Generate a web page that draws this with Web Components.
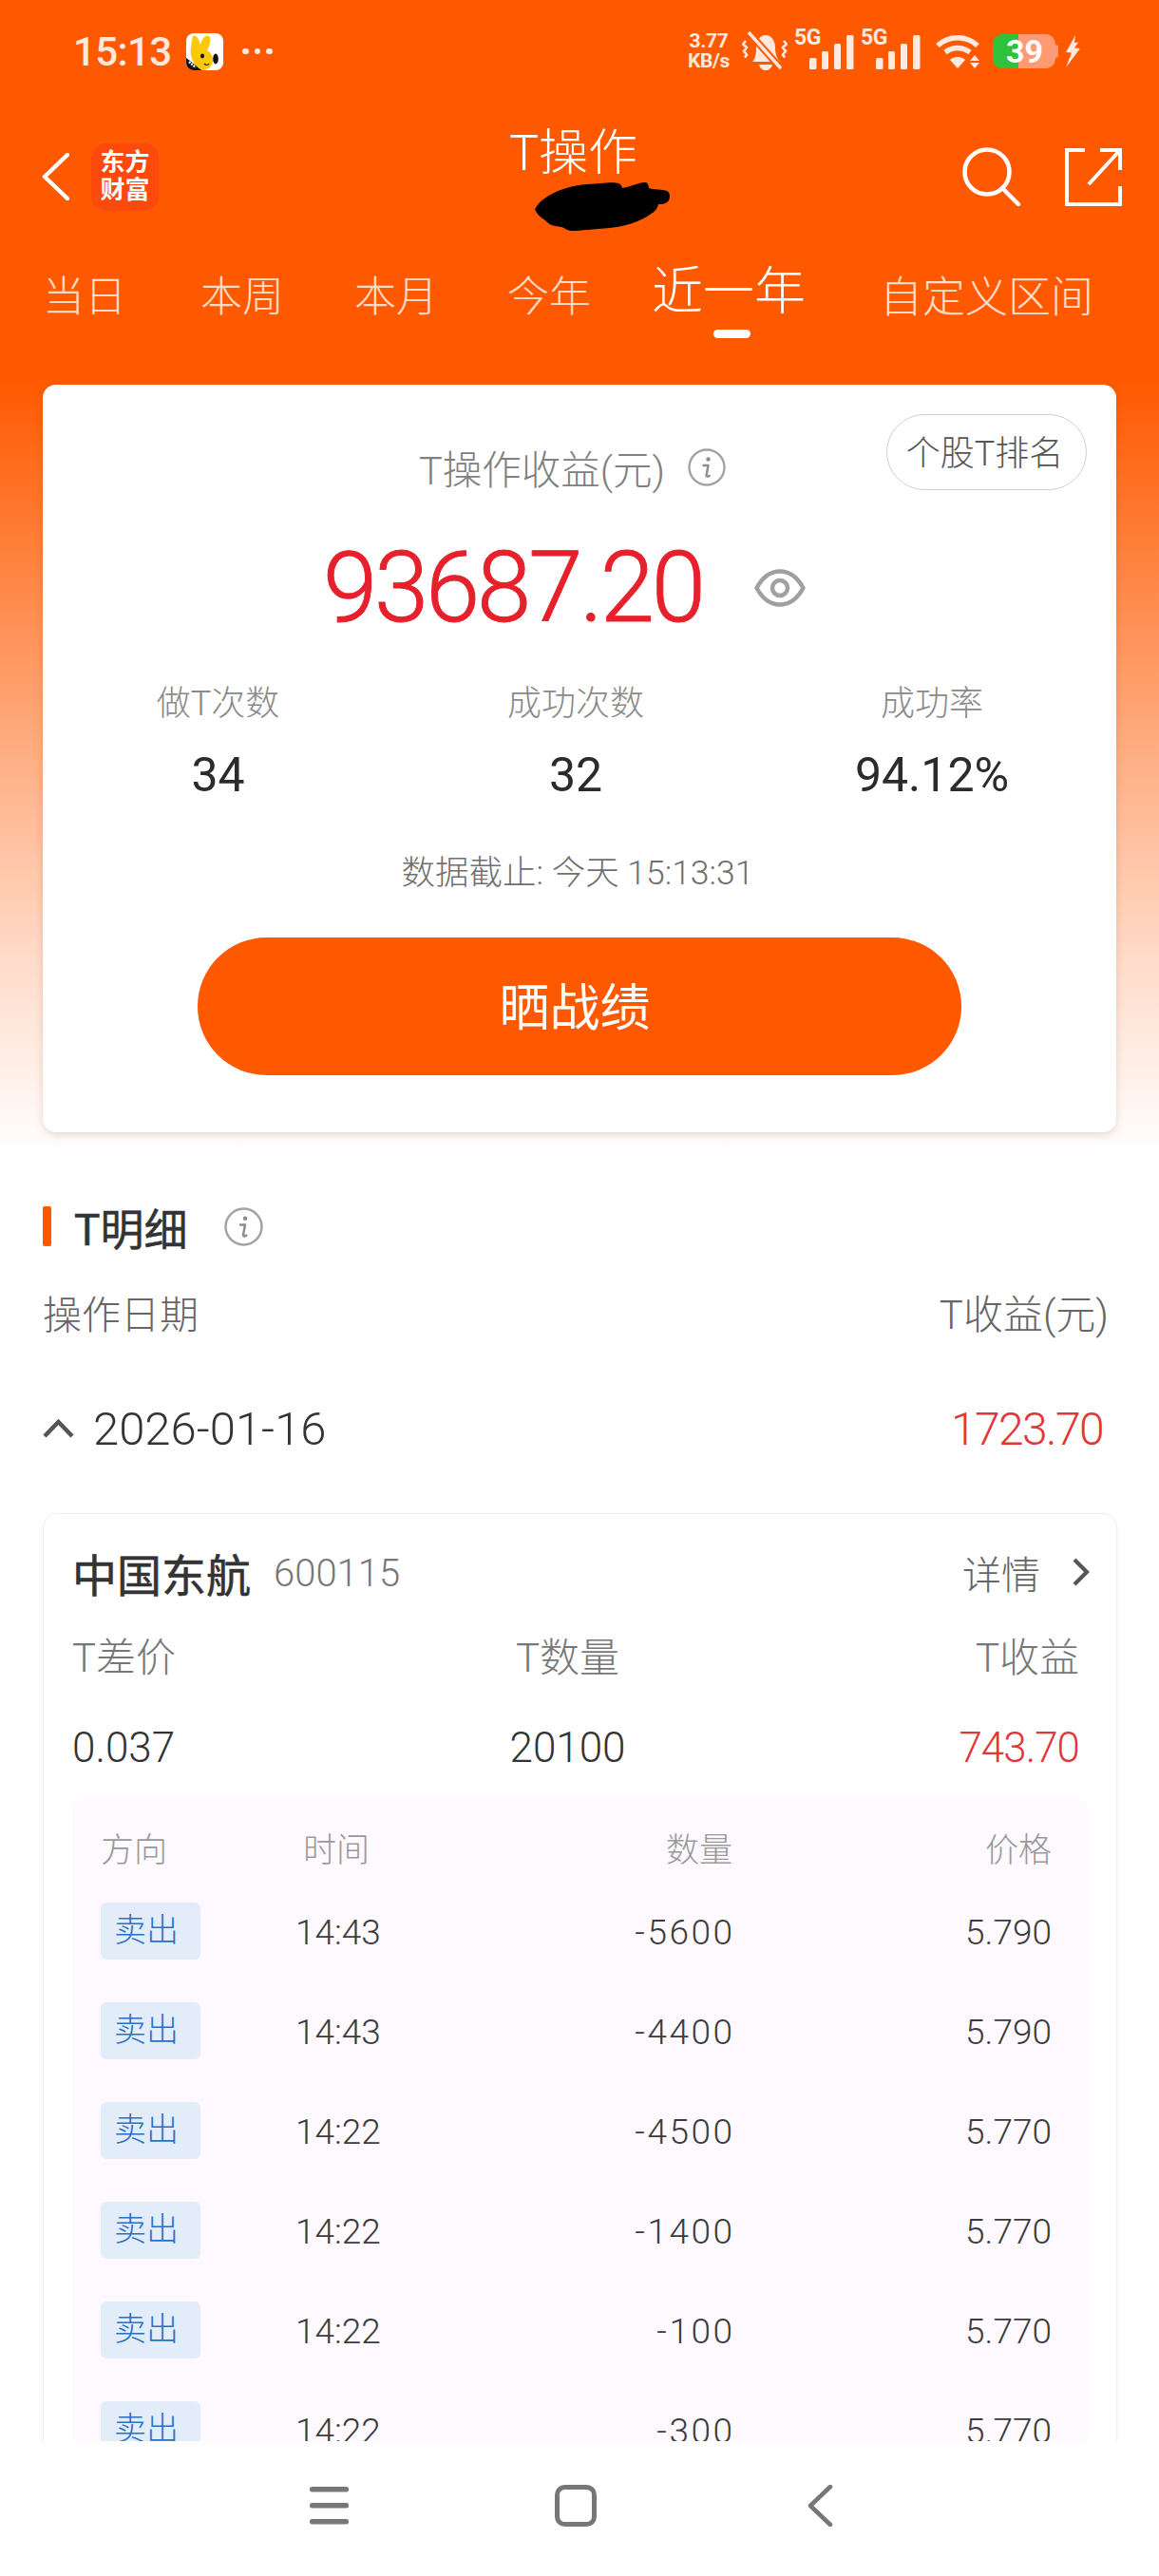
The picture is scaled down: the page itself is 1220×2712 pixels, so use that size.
<!DOCTYPE html>
<html lang="zh">
<head>
<meta charset="utf-8">
<title>T操作</title>
<style>
  html, body { margin: 0; padding: 0; }
  body {
    width: 1220px;
    height: 2712px;
    overflow: hidden;
    font-family: Roboto, "Noto Sans CJK SC", sans-serif;
    background: #fff;
  }
</style>
</head>
<body>
<t-page>
  <status-bar></status-bar>
  <app-header title-text="T操作"></app-header>
  <period-tabs></period-tabs>
  <summary-card></summary-card>
  <detail-section>
    <trade-card name="中国东航" code="600115" spread="0.037" amount="20100" profit="743.70">
      <trade-row time="14:43" qty="-5600" price="5.790"></trade-row>
      <trade-row time="14:43" qty="-4400" price="5.790"></trade-row>
      <trade-row time="14:22" qty="-4500" price="5.770"></trade-row>
      <trade-row time="14:22" qty="-1400" price="5.770"></trade-row>
      <trade-row time="14:22" qty="-100" price="5.770"></trade-row>
      <trade-row time="14:22" qty="-300" price="5.770"></trade-row>
    </trade-card>
  </detail-section>
</t-page>
<nav-bar></nav-bar>

<script>
const FONT = 'Roboto, "Noto Sans CJK SC", sans-serif';

const infoIcon = size => `
<svg width="${size}" height="${size}" viewBox="0 0 40 40" fill="none">
  <circle cx="20" cy="20" r="18.5" stroke="#a3a3a3" stroke-width="2.4"/>
  <circle cx="21.5" cy="11.5" r="2.2" fill="#8d8d8d"/>
  <path d="M16.5 18h5l-2 10.5c-.2 1.3 1 1.6 3.2.4" stroke="#8d8d8d" stroke-width="2.4" stroke-linecap="round" stroke-linejoin="round"/>
</svg>`;

const signal = `
<svg width="47" height="36" viewBox="0 0 47 36" fill="#ffe9df">
  <rect x="0" y="24" width="7.5" height="12" rx="1.5"/>
  <rect x="13" y="17" width="7" height="19" rx="1.5"/>
  <rect x="26" y="9" width="7" height="27" rx="1.5"/>
  <rect x="39" y="0" width="7.5" height="36" rx="1.5"/>
</svg>`;

class TPage extends HTMLElement {
  constructor() {
    super();
    this.attachShadow({ mode: 'open' });
    this.shadowRoot.innerHTML = `
<style>
  :host {
    display: block;
    height: 2570px;
    overflow: hidden;
    background: linear-gradient(180deg, #ff5900 0, #ff5900 400px, #ff9a63 700px, #ffd9c6 1000px, #ffffff 1215px);
    font-family: ${FONT};
  }
</style>
<slot></slot>`;
  }
}

class StatusBar extends HTMLElement {
  constructor() {
    super();
    this.attachShadow({ mode: 'open' });
    this.shadowRoot.innerHTML = `
<style>
  :host {
    display: flex;
    align-items: center;
    height: 108px;
    padding-left: 77px;
    color: #ffe9df;
    font-family: Roboto, sans-serif;
    box-sizing: border-box;
  }
  .time { font-size: 42px; font-weight: 500; width: 119px; letter-spacing: -.6px; }
  .app { width: 39px; height: 39px; display: block; }
  .dots { display: flex; gap: 6px; margin-left: 20px; }
  .dots i { width: 6.500px; height: 6.500px; border-radius: 50%; background: #ffe9df; }
  .right { display: flex; align-items: center; margin-left: auto; }
  .speed { width: 58px; font-size: 21px; font-weight: 700; line-height: 21px; text-align: center; margin-right: 6px; letter-spacing: -.3px; }
  .speed span { display: block; }
  .bell { display: block; margin: 0 8px 0 0; }
  .net { position: relative; width: 70px; height: 40px; }
  .net b { display: block; font-size: 23px; line-height: 20px; font-weight: 700; margin: -4px 0 0 -1px; letter-spacing: -.4px; }
  .net svg { position: absolute; left: 15px; top: 3px; }
  .wifi { display: block; margin: 0 10px 0 8px; }
  .battery { position: relative; width: 66px; height: 36px; display: flex; border-radius: 10px; background: linear-gradient(90deg, #2fc23a 27px, #ff9a75 27px); }
  .battery span { margin-left: 14px; color: #fff; font-size: 34px; line-height: 36px; font-weight: 700; }
  .nub { width: 3px; height: 14px; background: #ff9a75; border-radius: 0 3px 3px 0; }
  .bolt { display: block; margin: 0 82px 0 6px; }
</style>
<div class="time">15:13</div>
<svg class="app" viewBox="0 0 39 39">
  <defs><clipPath id="r"><rect width="39" height="39" rx="8"/></clipPath></defs>
  <g clip-path="url(#r)">
    <rect width="39" height="39" fill="#fff"/>
    <path d="M0 26 L17 39 H0Z" fill="#111"/>
    <path d="M7 3c3-2 6 2 8 9 2-7 6-11 9-9s1 10-2 15c5 3 8 9 5 15-2 4-7 6-10 6-6-3-11-9-12-16-1-7 1-15 2-20z" fill="#fbc80a"/>
    <ellipse cx="17" cy="24" rx="2" ry="2.4" fill="#111"/>
    <ellipse cx="31" cy="27" rx="2.8" ry="5.4" fill="#111"/>
    <path d="M19 32c2 2 4 2 5 0" stroke="#111" stroke-width="1.2" fill="none"/>
    <path d="M3 30l7 6" stroke="#eee" stroke-width="2.5" stroke-dasharray="2 1"/>
  </g>
</svg>
<div class="dots"><i></i><i></i><i></i></div>
<div class="right">
  <div class="speed"><span>3.77</span><span>KB/s</span></div>
  <svg class="bell" width="48" height="42" viewBox="0 0 48 42" fill="none">
    <path d="M11 32c3-3 4-8 4-14 0-8 4-14 10-14s10 6 10 13c0 7 2 12 5 15z" fill="#ffe9df"/>
    <path d="M18 35h14c-1 4-4 6-7 6s-6-2-7-6z" fill="#ffe9df"/>
    <path d="M7 1l34 38" stroke="#ff5900" stroke-width="7.500"/>
    <path d="M7 1l34 38" stroke="#ffe9df" stroke-width="3.400"/>
    <path d="M4 10l-3 3.500 4 3.500-3 4 3 3.500-2 3M44 10l3 3.500-4 3.500 3 4-3 3.500 2 3" stroke="#ffe9df" stroke-width="2.600"/>
  </svg>
  <div class="net"><b>5G</b>${signal}</div>
  <div class="net"><b>5G</b>${signal}</div>
  <svg class="wifi" width="50" height="38" viewBox="0 0 50 38" fill="none">
    <path d="M2 13c12-11 30-11 42 0M10 20c8-6 18-6 26 0" stroke="#ffe9df" stroke-width="5.400"/>
    <path d="M15 28c4-4 12-4 16 0l-8 9z" fill="#ffe9df"/>
    <path d="M41 23l5 6h-10zM41 37l5-6h-10z" fill="#ffe9df"/>
  </svg>
  <div class="battery"><span>39</span></div>
  <div class="nub"></div>
  <svg class="bolt" width="18" height="34" viewBox="0 0 18 34" fill="#ffe9df">
    <path d="M12 0L2 18l6 .5L2 34l15-20-6-.5 4-6-4 .5z"/>
  </svg>
</div>`;
  }
}

class AppHeader extends HTMLElement {
  constructor() {
    super();
    this.attachShadow({ mode: 'open' });
    this.shadowRoot.innerHTML = `
<style>
  :host {
    display: flex;
    position: relative;
    height: 156px;
    align-items: center;
    color: #fff;
    box-sizing: border-box;
    padding-left: 44px;
  }
  .back { display: block; }
  .logo {
    width: 71px;
    height: 71px;
    margin-left: 23px;
    border-radius: 15px;
    background: #fb4a0c;
    display: flex;
    flex-direction: column;
    align-items: center;
    justify-content: center;
    font-size: 26px;
    line-height: 29px;
    font-weight: 700;
  }
  .title {
    position: absolute;
    left: 536px;
    top: 25px;
    font-size: 52px;
    line-height: 58px;
    font-weight: 300;
    color: #fff;
    white-space: nowrap;
  }
  .blob { position: absolute; left: 560px; top: 82px; }
  .actions { margin-left: auto; display: flex; align-items: center; gap: 46px; padding-right: 39px; }
  .actions svg { display: block; }
</style>
<svg class="back" width="29" height="50" viewBox="0 0 29 50" fill="none">
  <path d="M27 2L3 25l24 23" stroke="#fff" stroke-width="4.500" stroke-linecap="round" stroke-linejoin="round"/>
</svg>
<div class="logo"><span>东方</span><span>财富</span></div>
<div class="title">${this.getAttribute('title-text')}</div>
<svg class="blob" width="146" height="54" viewBox="0 0 146 54" fill="#000">
  <path d="M3 32C5 20 30 6 58 4c14-1 28-3 33-1 3 1 4 4 4 5 7-1 20-7 25-6 2 1 3 4 3 6 4 2 15 1 19 3 4 2 4 9 0 12-3 2-6 2-9 2-1 5-4 8-9 11-9 6-22 12-42 14-18 1-30 3-40 3-5 0-7-3-11-4-8-1-12-2-16-6-3-3-13-8-12-16z"/>
</svg>
<div class="actions">
  <svg width="62" height="62" viewBox="0 0 62 62" fill="none" stroke="#fff" stroke-width="4.500" stroke-linecap="round">
    <circle cx="26" cy="26" r="23.500"/>
    <path d="M42 43l17 17"/>
  </svg>
  <svg width="60" height="61" viewBox="0 0 60 61" fill="none" stroke="#fff" stroke-width="4">
    <path d="M58 40v19H2V2h19"/>
    <path d="M25 38L58 2M37 2h21v21"/>
  </svg>
</div>`;
  }
}

class PeriodTabs extends HTMLElement {
  constructor() {
    super();
    this.attachShadow({ mode: 'open' });
    const tabs = ['当日', '本周', '本月', '今年', '近一年', '自定义区间'];
    this.shadowRoot.innerHTML = `
<style>
  :host {
    display: grid;
    grid-template-columns: 166px 162px 161px 152px 243px 215px;
    height: 90px;
    padding: 0 0 6px 45px;
    align-items: center;
    font-weight: 300;
    font-size: 44px;
    color: #ffdcc8;
    white-space: nowrap;
    position: relative;
  }
  .on { color: #fff; font-size: 54px; line-height: 60px; margin: -2px 0 0 0; position: relative; }
  .on::after {
    content: "";
    position: absolute;
    left: 65px;
    top: 69px;
    width: 39px;
    height: 9px;
    border-radius: 5px;
    background: #fff;
  }
  .last { font-size: 45px; margin-left: -3px; }
</style>
${tabs.map((t, i) => `<div class="${i === 4 ? 'on' : i === 5 ? 'last' : ''}">${t}</div>`).join('')}`;
  }
}

class SummaryCard extends HTMLElement {
  constructor() {
    super();
    this.attachShadow({ mode: 'open' });
    this.shadowRoot.innerHTML = `
<style>
  :host {
    display: block;
    position: relative;
    box-sizing: border-box;
    width: 1130px;
    height: 787px;
    margin: 45px 0 0 45px;
    padding-top: 62px;
    background: #fff;
    border-radius: 14px;
    box-shadow: 0 3px 8px rgba(120, 60, 20, .18);
    text-align: center;
  }
  .pill {
    position: absolute;
    top: 31px;
    right: 31px;
    width: 211px;
    height: 80px;
    box-sizing: border-box;
    padding: 0 4px 5px 0;
    border: 1.500px solid #cfcfcf;
    border-radius: 40px;
    display: flex;
    align-items: center;
    justify-content: center;
    font-size: 36px;
    font-weight: 300;
    color: #555;
  }
  .label {
    display: flex;
    align-items: center;
    justify-content: center;
    gap: 24px;
    height: 50px;
    padding-right: 15px;
    font-size: 41.500px;
    font-weight: 300;
    color: #808080;
  }
  .amount { display: flex; align-items: center; height: 110px; margin-top: 47px; padding-left: 295px; }
  .amount b { font-size: 103px; line-height: 110px; font-weight: 300; -webkit-text-stroke: 1px #e6212b; color: #e6212b; letter-spacing: -3.100px; width: 454px; text-align: left; }
  .stats { display: grid; grid-template-columns: repeat(3, 1fr); margin-top: 44px; padding-right: 8px; }
  .stats > :first-child { margin-left: -5px; }
  .stats > :last-child { padding-left: 2px; }
  .stats .k { font-size: 36px; line-height: 46px; font-weight: 300; color: #8a8a8a; }
  .stats .v { font-size: 50px; line-height: 60px; margin-top: 22px; font-weight: 400; color: #2b2b2b; }
  .asof { font-size: 35.500px; line-height: 44px; margin-top: 51px; font-weight: 300; color: #6f6f6f; padding-right: 4px; }
  .share {
    width: 804px;
    height: 145px;
    margin: 46px auto 0;
    box-sizing: border-box;
    padding: 0 10px 5px 0;
    border-radius: 73px;
    background: #ff5900;
    color: #fff;
    font-size: 53px;
    display: flex;
    align-items: center;
    justify-content: center;
  }
  svg { display: block; }
</style>
<div class="pill">个股T排名</div>
<div class="label"><span>T操作收益(元)</span>${infoIcon(40)}</div>
<div class="amount">
  <b>93687.20</b>
  <svg width="54" height="40" viewBox="0 0 54 40" fill="none">
    <path d="M2.500 20C9 8 18 2.500 27 2.500S45 8 51.500 20C45 32 36 37.500 27 37.500S9 32 2.500 20z" stroke="#a0a0a0" stroke-width="4.500" stroke-linejoin="round"/>
    <circle cx="27" cy="20" r="8" stroke="#a0a0a0" stroke-width="4.500"/>
  </svg>
</div>
<div class="stats">
  <div><div class="k">做T次数</div><div class="v">34</div></div>
  <div><div class="k">成功次数</div><div class="v">32</div></div>
  <div><div class="k">成功率</div><div class="v">94.12%</div></div>
</div>
<div class="asof">数据截止: 今天 15:13:31</div>
<div class="share">晒战绩</div>`;
  }
}

class DetailSection extends HTMLElement {
  constructor() {
    super();
    this.attachShadow({ mode: 'open' });
    this.shadowRoot.innerHTML = `
<style>
  :host { display: block; padding: 75px 44px 0 45px; }
  .head { display: flex; align-items: center; height: 48px; }
  .head i { width: 9px; height: 42px; border-radius: 2px; background: #ff5900; margin-right: 24px; }
  .head span { font-size: 46px; font-weight: 400; -webkit-text-stroke: .5px #333; color: #333; margin-right: 39px; }
  .cols { display: flex; justify-content: space-between; height: 50px; margin-top: 45px; line-height: 50px; padding: 0 9px 0 0; font-size: 41px; font-weight: 300; color: #666; }
  .cols :last-child { font-size: 42px; }
  .day { display: flex; align-items: center; height: 60px; margin-top: 64px; font-size: 49px; font-weight: 300; color: #333; padding-right: 15px; }
  .day svg { margin-right: 20px; display: block; }
  .day .sum { margin-left: auto; font-size: 48px; letter-spacing: -1.600px; color: #e0383a; }
  ::slotted(trade-card) { margin-top: 59px; }
  svg { display: block; }
</style>
<div class="head"><i></i><span>T明细</span>${infoIcon(41)}</div>
<div class="cols"><span>操作日期</span><span>T收益(元)</span></div>
<div class="day">
  <svg width="33" height="20" viewBox="0 0 33 20" fill="none">
    <path d="M2 18L16.500 3 31 18" stroke="#555" stroke-width="4.500"/>
  </svg>
  <span>2026-01-16</span>
  <span class="sum">1723.70</span>
</div>
<slot></slot>`;
  }
}

class TradeCard extends HTMLElement {
  constructor() {
    super();
    this.attachShadow({ mode: 'open' });
    const a = n => this.getAttribute(n);
    this.shadowRoot.innerHTML = `
<style>
  :host {
    display: block;
    border: 1.500px solid #f0f0f0;
    border-bottom: 0;
    border-radius: 16px 16px 0 0;
    background: #fff;
    padding: 31px 30px 0 30px;
    box-shadow: 0 0 4px rgba(0, 0, 0, .03);
  }
  .top { display: flex; align-items: center; height: 60px; }
  .name { font-size: 47px; font-weight: 400; -webkit-text-stroke: .6px #333; color: #333; }
  .code { font-size: 40px; font-weight: 300; color: #777; margin-left: 24px; padding-top: 2px; }
  .more { margin-left: auto; font-size: 41px; font-weight: 300; color: #666; display: flex; align-items: center; gap: 33px; }
  .more svg { display: block; margin-right: -2px; }
  .grid { display: grid; grid-template-columns: 1fr 1fr 1fr; padding: 0 9px 0 0; }
  .labels { height: 50px; line-height: 50px; margin-top: 36px; font-size: 42px; font-weight: 300; color: #777; }
  .vals { height: 50px; line-height: 50px; margin-top: 44px; font-size: 44px; font-weight: 300; color: #333; }
  .grid > :nth-child(2) { text-align: center; padding-right: 17px; }
  .grid > :nth-child(3) { text-align: right; }
  .red { color: #e0383a; letter-spacing: -1px; }
  .table {
    margin-top: 29px;
    background: #fdf9fe;
    border-radius: 12px 12px 0 0;
    padding: 35px 39px 0 30px;
  }
  .thead {
    display: grid;
    grid-template-columns: 213px 87px 365px 336px;
    height: 40px;
    line-height: 40px;
    font-size: 35px;
    font-weight: 300;
    color: #999;
    margin-bottom: 13px;
  }
  .thead :nth-child(2) { white-space: nowrap; }
  .thead :nth-child(3), .thead :nth-child(4) { text-align: right; }
</style>
<div class="top">
  <span class="name">${a('name')}</span><span class="code">${a('code')}</span>
  <span class="more">详情
    <svg width="19" height="30" viewBox="0 0 19 30" fill="none"><path d="M3 2l13 13L3 28" stroke="#555" stroke-width="4.200"/></svg>
  </span>
</div>
<div class="grid labels"><span>T差价</span><span>T数量</span><span>T收益</span></div>
<div class="grid vals"><span>${a('spread')}</span><span>${a('amount')}</span><span class="red">${a('profit')}</span></div>
<div class="table">
  <div class="thead"><span>方向</span><span>时间</span><span>数量</span><span>价格</span></div>
  <slot></slot>
</div>`;
  }
}

class TradeRow extends HTMLElement {
  constructor() {
    super();
    this.attachShadow({ mode: 'open' });
    const a = n => this.getAttribute(n);
    this.shadowRoot.innerHTML = `
<style>
  :host {
    display: grid;
    grid-template-columns: 205px 100px 360px 336px;
    align-items: center;
    height: 105px;
    font-size: 37px;
    font-weight: 300;
    color: #3c3c3c;
  }
  .side {
    width: 105px;
    height: 60px;
    margin-top: -4px;
    box-sizing: border-box;
    padding-left: 14px;
    line-height: 58px;
    background: #e3ecf9;
    border-radius: 6px;
    font-size: 34px;
    color: #2a72c8;
  }
  .q, .p { text-align: right; }
  .q { letter-spacing: 2.500px; margin-right: -2.500px; }
</style>
<div class="side">卖出</div>
<div>${a('time')}</div>
<div class="q">${a('qty')}</div>
<div class="p">${a('price')}</div>`;
  }
}

class NavBar extends HTMLElement {
  constructor() {
    super();
    this.attachShadow({ mode: 'open' });
    this.shadowRoot.innerHTML = `
<style>
  :host {
    display: flex;
    height: 142px;
    background: #fff;
    align-items: center;
    box-sizing: border-box;
    padding: 0 0 6px 326px;
  }
  svg { display: block; }
  .home { margin-left: 217px; }
  .back { margin-left: 222px; }
</style>
<svg width="41" height="40" viewBox="0 0 41 40" fill="#777">
  <rect width="41" height="5.500" rx="2.500" y="0"/>
  <rect width="41" height="5.500" rx="2.500" y="17"/>
  <rect width="41" height="5.500" rx="2.500" y="34"/>
</svg>
<svg class="home" width="44" height="44" viewBox="0 0 44 44" fill="none">
  <rect x="2.500" y="2.500" width="39" height="39" rx="8" stroke="#777" stroke-width="5"/>
</svg>
<svg class="back" width="27" height="44" viewBox="0 0 27 44" fill="none">
  <path d="M24 2L3 22l21 20" stroke="#777" stroke-width="4.500" stroke-linecap="round" stroke-linejoin="round"/>
</svg>`;
  }
}

customElements.define('t-page', TPage);
customElements.define('status-bar', StatusBar);
customElements.define('app-header', AppHeader);
customElements.define('period-tabs', PeriodTabs);
customElements.define('summary-card', SummaryCard);
customElements.define('detail-section', DetailSection);
customElements.define('trade-card', TradeCard);
customElements.define('trade-row', TradeRow);
customElements.define('nav-bar', NavBar);
</script>
</body>
</html>
